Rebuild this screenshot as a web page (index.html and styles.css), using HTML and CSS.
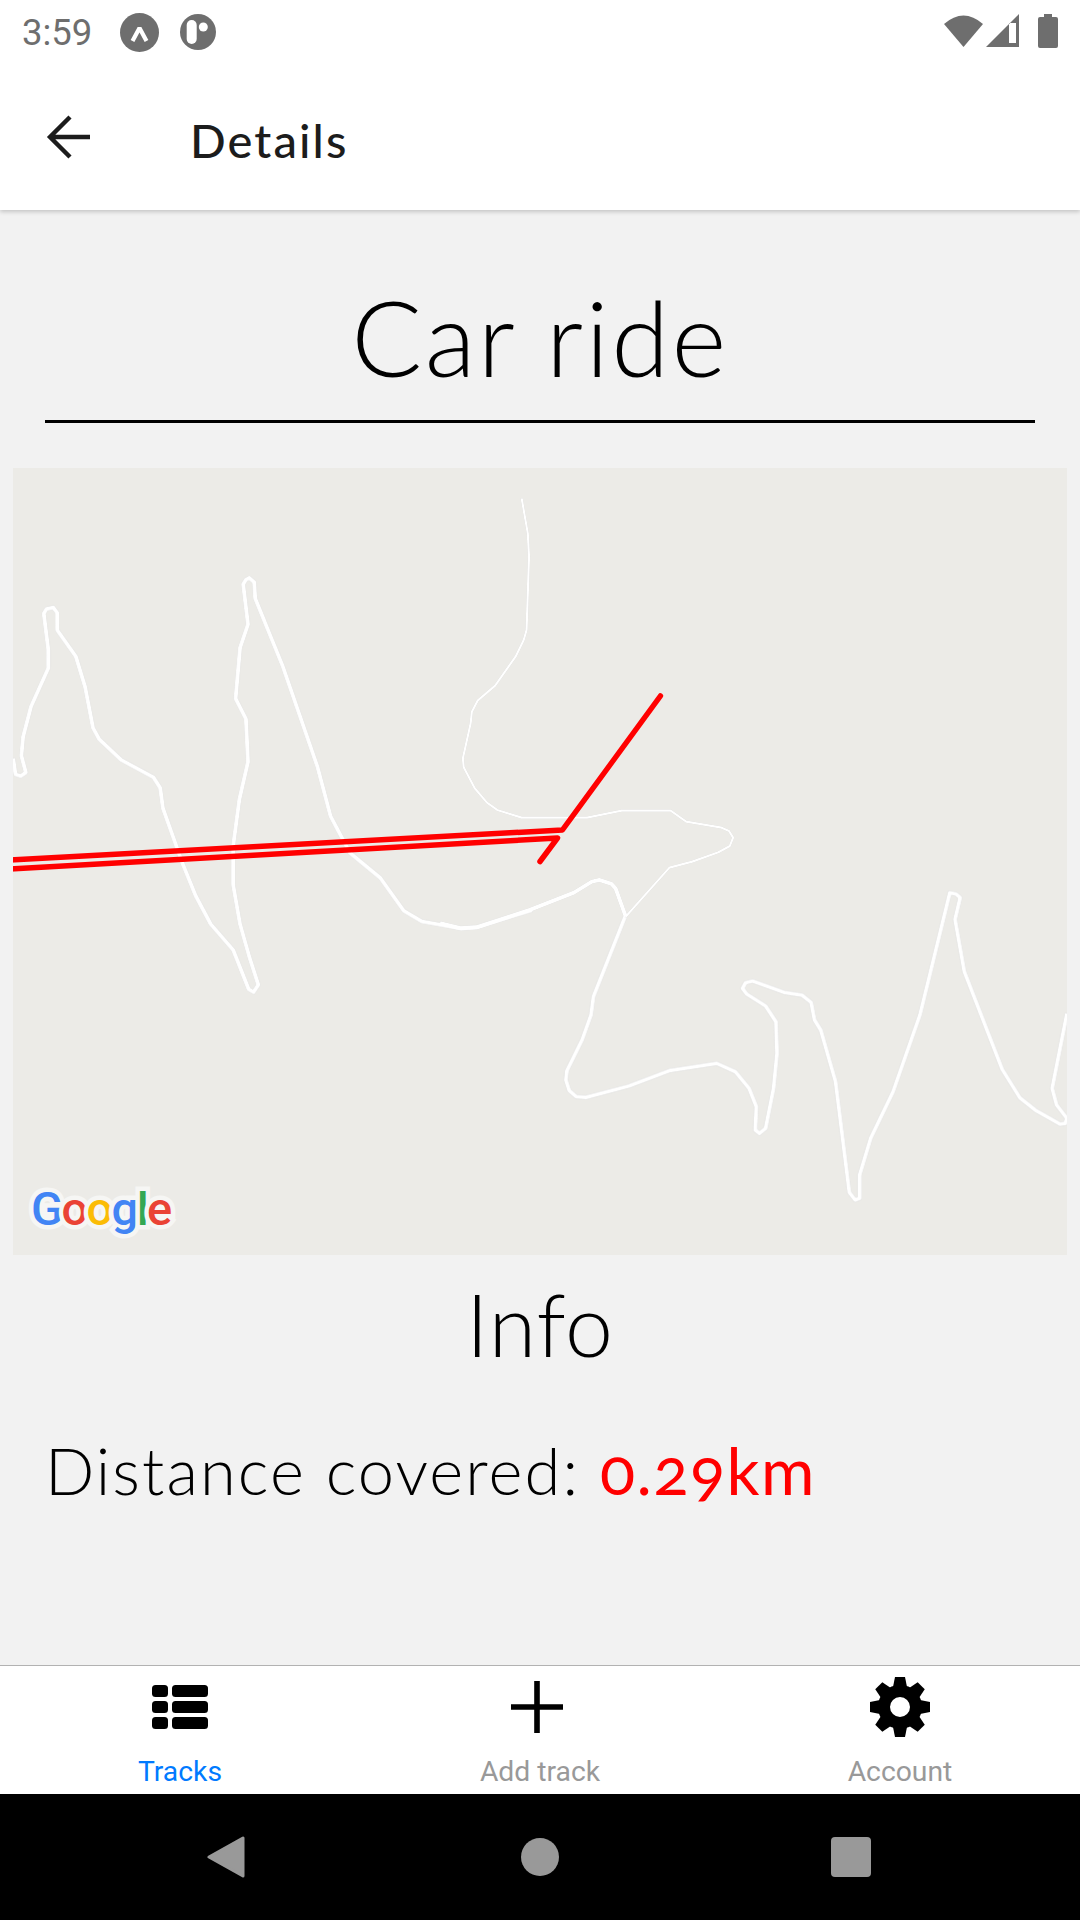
FILE: index.html
```html
<!DOCTYPE html>
<html lang="en">
<head>
<meta charset="utf-8">
<title>Details</title>
<link rel="stylesheet" href="styles.css">
</head>
<body>
<div class="phone">
  <div class="status">
    <span class="time">3:59</span>
    <svg class="notif" width="39" height="39" viewBox="0 0 39 39"><circle cx="19.5" cy="19.5" r="19.5" fill="#6e6e6e"/><path d="M12.5 28 L19.5 15 L26.5 28" fill="none" stroke="#fff" stroke-width="4.2" stroke-linejoin="bevel"/></svg>
    <svg class="notif" width="36" height="36" viewBox="0 0 36 36"><circle cx="18" cy="18" r="18" fill="#6e6e6e"/><rect x="6.7" y="6" width="10" height="24" rx="5" fill="#fff"/><circle cx="23.3" cy="13" r="4.5" fill="#fff"/></svg>
    <span class="spacer"></span>
    <svg class="sys" width="115" height="36" viewBox="0 0 115 36"><path d="M0 10 Q19.5 -7 39 10 L19.5 33 Z" fill="#6e6e6e"/><path d="M42 33 L75 0 V33 Z M65 29 H72 V9 H65 Z" fill="#6e6e6e" fill-rule="evenodd"/><path d="M100 0 H108 V3 H112 Q114 3 114 5 V32 Q114 34 112 34 H96 Q94 34 94 32 V5 Q94 3 96 3 H100 Z" fill="#6e6e6e"/></svg>
  </div>
  <header class="topbar">
    <svg class="back" width="44" height="44" viewBox="0 0 44 44"><path d="M44 22 H5 M24 2 L4 22 L24 42" fill="none" stroke="#1c1c1c" stroke-width="4.4"/></svg>
    <h1 class="topbar-title">Details</h1>
  </header>
  <main class="content">
    <h2 class="ride-title">Car ride</h2>
    <div class="map">
      <svg class="map-svg" viewBox="13 468 1054 787" preserveAspectRatio="none">
        <g class="roads">
          <g transform="translate(0,460) scale(.3444,.3571)">
            <path class="road" d="M38 835 L45 880 L60 885 L75 875 L62 828 L67 775 L90 690 L140 583 L140 530 L127 430 L135 417 L155 413 L166 428 L166 476 L220 550 L247 635 L270 750 L288 782 L352 840 L445 888 L465 918 L473 975 L530 1130 L568 1220 L612 1300 L677 1372 L722 1482 L736 1490 L750 1470 L725 1395 L697 1300 L677 1190 L677 1080 L695 950 L720 845 L714 725 L684 668 L697 525 L720 460 L706 348 L714 335 L724 330 L738 342 L741 388 L820 575 L922 860 L960 998 L1016 1100 L1104 1170 L1172 1262 L1225 1292 L1340 1312 L1385 1308 L1545 1260"/>
          </g>
          <g transform="translate(440,480) scale(.40816,.3333)">
            <path class="road" d="M0 1330 L50 1345 L90 1342 L220 1290 L328 1238 L372 1205 L390 1200 L420 1212 L430 1225 L455 1310"/>
            <path class="road-thin" d="M200 55 L215 160 L218 230 L212 450 L205 480 L185 530 L135 617 L92 662 L78 695 L75 730 L56 835 L58 862 L85 925 L115 968 L140 990 L200 1013 L360 1013 L445 992 L565 992 L603 1025 L690 1043 L708 1053 L718 1073 L710 1098 L682 1117 L618 1145 L562 1163 L455 1310"/>
          </g>
          <g transform="translate(540,880) scale(.3444,.3333)">
            <path class="road" d="M247 110 L155 350 L148 405 L122 480 L78 572 L75 600 L85 632 L105 650 L133 652 L258 618 L375 572 L513 550 L567 575 L607 625 L628 680 L625 750 L637 760 L655 745 L678 625 L688 520 L685 425 L655 378 L600 342 L588 325 L597 308 L617 303 L708 337 L760 345 L787 367 L797 420 L815 450 L858 605 L898 937 L915 960 L928 955 L928 885 L960 775 L1025 635 L1103 405 L1190 38 L1208 42 L1220 53 L1205 118 L1232 275 L1342 568 L1393 653 L1438 690 L1510 732 L1525 730 L1530 715 L1500 675 L1487 625 L1530 400"/>
          </g>
        </g>
        <path class="track" d="M660.4 696 L562.4 830 L10 860"/>
        <path class="track" d="M540 861.5 L557.5 838 L10 869"/>
      </svg>
      <div class="google"><span class="g-blue">G</span><span class="g-red">o</span><span class="g-yellow">o</span><span class="g-blue">g</span><span class="g-green">l</span><span class="g-red">e</span></div>
    </div>
    <h3 class="info-title">Info</h3>
    <p class="distance">Distance covered: <span class="distance-value">0.29km</span></p>
  </main>
  <nav class="tabs">
    <div class="tab">
      <div class="tab-slot">
        <svg width="56" height="44" viewBox="0 0 56 44"><g fill="#000"><rect x="0" y="0" width="16" height="12" rx="3.5"/><rect x="20" y="0" width="36" height="12" rx="3.5"/><rect x="0" y="16" width="16" height="12" rx="3.5"/><rect x="20" y="16" width="36" height="12" rx="3.5"/><rect x="0" y="32" width="16" height="12" rx="3.5"/><rect x="20" y="32" width="36" height="12" rx="3.5"/></g></svg>
      </div>
      <span class="tab-label active">Tracks</span>
    </div>
    <div class="tab">
      <div class="tab-slot">
        <svg class="plus" width="52" height="52" viewBox="0 0 52 52"><path d="M26 0 V52 M0 26 H52" stroke="#000" stroke-width="5.6" fill="none"/></svg>
      </div>
      <span class="tab-label">Add track</span>
    </div>
    <div class="tab">
      <div class="tab-slot">
        <svg width="60" height="60" viewBox="0 0 60 60"><circle cx="30" cy="30" r="16" fill="none" stroke="#000" stroke-width="12"/><g fill="#000"><path d="M23 10 L25 0 H35 L37 10 Z"/><path d="M23 10 L25 0 H35 L37 10 Z" transform="rotate(45 30 30)"/><path d="M23 10 L25 0 H35 L37 10 Z" transform="rotate(90 30 30)"/><path d="M23 10 L25 0 H35 L37 10 Z" transform="rotate(135 30 30)"/><path d="M23 10 L25 0 H35 L37 10 Z" transform="rotate(180 30 30)"/><path d="M23 10 L25 0 H35 L37 10 Z" transform="rotate(225 30 30)"/><path d="M23 10 L25 0 H35 L37 10 Z" transform="rotate(270 30 30)"/><path d="M23 10 L25 0 H35 L37 10 Z" transform="rotate(315 30 30)"/></g></svg>
      </div>
      <span class="tab-label">Account</span>
    </div>
  </nav>
  <div class="sysnav">
    <svg width="38" height="42" viewBox="0 0 38 42"><path d="M36 2 V40 L2 21 Z" fill="#999" stroke="#999" stroke-width="3" stroke-linejoin="round"/></svg>
    <svg class="nav-home" width="38" height="38" viewBox="0 0 38 38"><circle cx="19" cy="19" r="19" fill="#999"/></svg>
    <svg width="40" height="40" viewBox="0 0 40 40"><rect width="40" height="40" rx="4" fill="#999"/></svg>
  </div>
</div>
</body>
</html>
```
FILE: styles.css
```css
* { box-sizing: border-box; }
html, body { margin: 0; padding: 0; }
body { width: 1080px; height: 1920px; overflow: hidden; background: #f2f2f2; font-family: "Lato", "Liberation Sans", sans-serif; }
.phone { width: 1080px; height: 1920px; display: flex; flex-direction: column; }

.status { height: 66px; background: #fff; display: flex; align-items: center; padding: 0 21px 2px 22px; flex: none; position: relative; z-index: 1; }
.time { font-family: Roboto, sans-serif; font-size: 36.5px; color: #6e6e6e; width: 98px; }
.notif { margin-right: 21px; flex: none; }
.spacer { flex: 1; }
.sys { flex: none; }

.topbar { height: 144px; background: #fff; display: flex; align-items: center; padding: 4px 0 0 46px; box-shadow: 0 2px 4px rgba(0,0,0,.18); flex: none; position: relative; }
.back { flex: none; margin: -7px 100px 0 0; }
.topbar-title { margin: 0; font-size: 47px; font-weight: 500; letter-spacing: 2.1px; color: #1c1c1c; }

.content { flex: 1; display: flex; flex-direction: column; align-items: center; min-height: 0; }
.ride-title { margin: 61px 0 0; width: 990px; height: 152px; border-bottom: 3px solid #000; text-align: center; font-size: 105px; line-height: 130px; font-weight: 300; letter-spacing: 2.4px; color: #000; }
.map { position: relative; margin-top: 45px; width: 1054px; height: 787px; background: #ecebe7; overflow: hidden; flex: none; }
.map-svg { display: block; width: 1054px; height: 787px; }
.roads { filter: drop-shadow(0 0 .6px #c8c8c8); }
.road, .road-thin, .track { fill: none; vector-effect: non-scaling-stroke; stroke-linejoin: round; }
.road { stroke: #fff; stroke-width: 4px; }
.road-thin { stroke: #fff; stroke-width: 2.2px; }
.track { stroke: #f00; stroke-width: 5.5px; stroke-linecap: round; }
.google { position: absolute; left: 18px; top: 713px; font-family: Roboto, sans-serif; font-size: 47px; line-height: 56px; font-weight: 500; letter-spacing: -1.6px; -webkit-text-stroke: 9px #f6f6f4; paint-order: stroke fill; }
.g-blue { color: #4285f4; } .g-red { color: #ea4335; } .g-yellow { color: #fbbc05; } .g-green { color: #34a853; }

.info-title { margin: 19px 0 0; font-size: 86px; line-height: 100px; font-weight: 300; letter-spacing: 1px; color: #000; }
.distance { margin: 58px 0 0; align-self: flex-start; padding-left: 45px; font-size: 65px; line-height: 76px; font-weight: 300; letter-spacing: 2.1px; color: #000; white-space: nowrap; }
.distance-value { color: #f00; font-weight: 400; letter-spacing: 1.5px; font-variant-numeric: oldstyle-nums; }

.tabs { height: 129px; background: #fff; border-top: 1px solid #b2b2b2; display: flex; flex: none; }
.tab { flex: 1; display: flex; flex-direction: column; align-items: center; }
.tab-slot { height: 82px; display: flex; align-items: center; justify-content: center; flex: none; }
.tab-slot svg { display: block; }
.plus { margin-right: 6px; }
.tab-label { margin-top: auto; margin-bottom: 4px; font-family: Roboto, sans-serif; font-size: 28.3px; line-height: 36px; color: #999; }
.tab-label.active { color: #007aff; }

.sysnav { height: 126px; background: #000; display: flex; align-items: center; flex: none; padding-left: 207px; }
.nav-home { margin: 0 272px 0 276px; }
```
